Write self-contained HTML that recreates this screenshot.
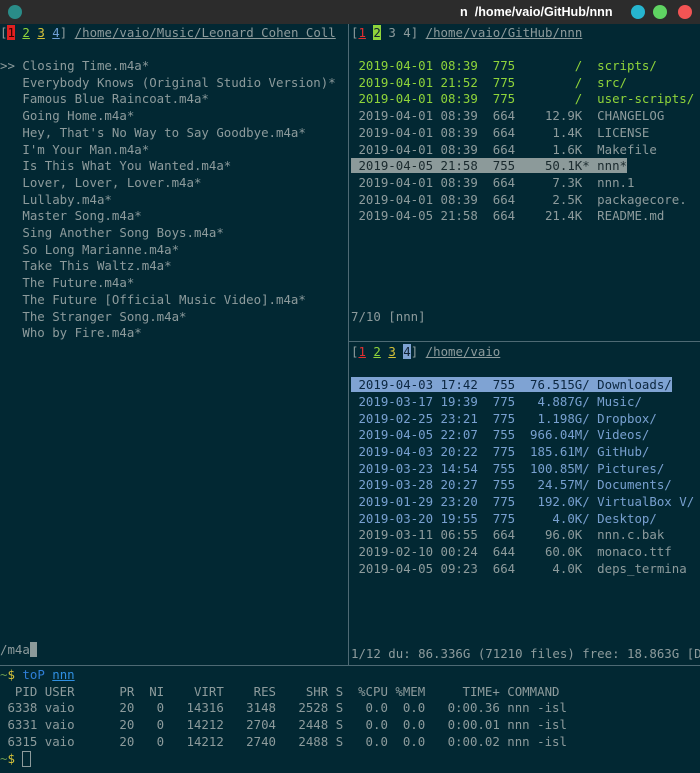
<!DOCTYPE html>
<html><head><meta charset="utf-8"><style>
*{margin:0;padding:0;box-sizing:border-box}
body{width:700px;height:773px;background:#022833;overflow:hidden;position:relative;font-family:"DejaVu Sans Mono","Liberation Mono",monospace;font-size:12.4px;color:#8d9b9c}
.tb{position:absolute;left:0;top:0;width:700px;height:24px;background:#2c2c2c}
.c{position:absolute;width:14px;height:14px;border-radius:50%;top:5px}
.ttl{position:absolute;left:460px;top:5px;font-family:"Liberation Sans",sans-serif;font-weight:bold;font-size:12.6px;color:#fff;white-space:pre}
.p{position:absolute;white-space:pre;line-height:16.7px}
.g{color:#8fd43a}.y{color:#d6c23a}.b{color:#6f9fd6}.r{color:#e03030}
.u{text-decoration:underline}
.d{color:#78a0d0}
.sel{background:#8c9a9a;color:#1a2a2e}
.selb{background:#7fa3d3;color:#0c2740}
</style></head><body>
<div class="tb">
<div class="c" style="left:8px;background:#2a8c88"></div>
<div class="ttl">n  /home/vaio/GitHub/nnn</div>
<div class="c" style="left:631px;background:#26b5cf"></div>
<div class="c" style="left:653px;background:#5fd362"></div>
<div class="c" style="left:678px;background:#f25454"></div>
</div>
<div style="position:absolute;left:348px;top:24px;width:1px;height:641px;background:#4e6a74"></div>
<div style="position:absolute;left:349px;top:341px;width:351px;height:1px;background:#4e6a74"></div>
<div style="position:absolute;left:0;top:665px;width:700px;height:1px;background:#4e6a74"></div>

<div class="p" style="left:0;top:24.6px">[<span style="background:#e02020;color:#300">1</span> <span class="g u">2</span> <span class="y u">3</span> <span class="b u">4</span>] <span class="u">/home/vaio/Music/Leonard Cohen Coll</span>

&gt;&gt; Closing Time.m4a*
   Everybody Knows (Original Studio Version)*
   Famous Blue Raincoat.m4a*
   Going Home.m4a*
   Hey, That's No Way to Say Goodbye.m4a*
   I'm Your Man.m4a*
   Is This What You Wanted.m4a*
   Lover, Lover, Lover.m4a*
   Lullaby.m4a*
   Master Song.m4a*
   Sing Another Song Boys.m4a*
   So Long Marianne.m4a*
   Take This Waltz.m4a*
   The Future.m4a*
   The Future [Official Music Video].m4a*
   The Stranger Song.m4a*
   Who by Fire.m4a*</div>
<div class="p" style="left:0;top:642px">/m4a<span style="background:#8c9a9a"> </span></div>

<div class="p" style="left:351px;top:24.6px">[<span class="r u">1</span> <span style="background:#8fd43a;color:#123">2</span> 3 4] <span class="u">/home/vaio/GitHub/nnn</span>

<span class="g"> 2019-04-01 08:39  775        /  scripts/
 2019-04-01 21:52  775        /  src/
 2019-04-01 08:39  775        /  user-scripts/</span>
 2019-04-01 08:39  664    12.9K  CHANGELOG
 2019-04-01 08:39  664     1.4K  LICENSE
 2019-04-01 08:39  664     1.6K  Makefile
<span class="sel"> 2019-04-05 21:58  755    50.1K* nnn*</span>
 2019-04-01 08:39  664     7.3K  nnn.1
 2019-04-01 08:39  664     2.5K  packagecore.
 2019-04-05 21:58  664    21.4K  README.md</div>
<div class="p" style="left:351px;top:309px">7/10 [nnn]</div>

<div class="p" style="left:351px;top:343.7px">[<span class="r u">1</span> <span class="g u">2</span> <span class="y u">3</span> <span style="background:#7fa3d3;color:#123">4</span>] <span class="u">/home/vaio</span>

<span class="selb"> 2019-04-03 17:42  755  76.515G/ Downloads/</span>
<span class="d"> 2019-03-17 19:39  775   4.887G/ Music/
 2019-02-25 23:21  775   1.198G/ Dropbox/
 2019-04-05 22:07  755  966.04M/ Videos/
 2019-04-03 20:22  775  185.61M/ GitHub/
 2019-03-23 14:54  755  100.85M/ Pictures/
 2019-03-28 20:27  755   24.57M/ Documents/
 2019-01-29 23:20  775   192.0K/ VirtualBox V/
 2019-03-20 19:55  775     4.0K/ Desktop/</span>
 2019-03-11 06:55  664    96.0K  nnn.c.bak
 2019-02-10 00:24  644    60.0K  monaco.ttf
 2019-04-05 09:23  664     4.0K  deps_termina</div>
<div class="p" style="left:351px;top:646px">1/12 du: 86.336G (71210 files) free: 18.863G [D</div>

<div class="p" style="left:0;top:667px"><span style="color:#6a9a50">~</span><span class="y">$</span> <span style="color:#2f7fd8">toP</span> <span style="color:#2f8fe0" class="u">nnn</span>
  PID USER      PR  NI    VIRT    RES    SHR S  %CPU %MEM     TIME+ COMMAND
 6338 vaio      20   0   14316   3148   2528 S   0.0  0.0   0:00.36 nnn -isl
 6331 vaio      20   0   14212   2704   2448 S   0.0  0.0   0:00.01 nnn -isl
 6315 vaio      20   0   14212   2740   2488 S   0.0  0.0   0:00.02 nnn -isl
<span style="color:#6a9a50">~</span><span class="y">$</span> <span style="display:inline-block;width:9px;height:16px;border:1px solid #8d9b9c;vertical-align:middle"></span></div>
</body></html>
